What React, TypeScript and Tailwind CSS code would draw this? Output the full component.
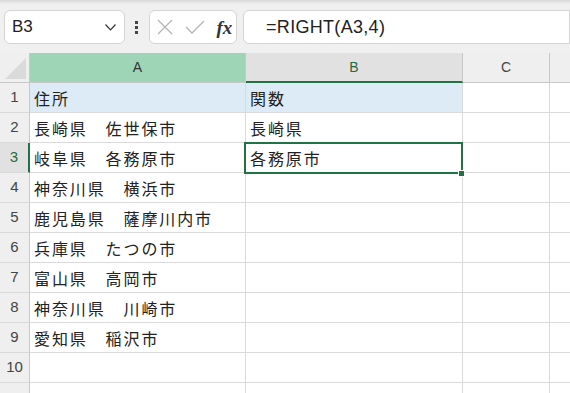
const rows = [
  ['住所', '関数'],
  ['長崎県　佐世保市', '長崎県'],
  ['岐阜県　各務原市', '各務原市'],
  ['神奈川県　横浜市', ''],
  ['鹿児島県　薩摩川内市', ''],
  ['兵庫県　たつの市', ''],
  ['富山県　高岡市', ''],
  ['神奈川県　川崎市', ''],
  ['愛知県　稲沢市', ''],
  ['', ''],
  ['', ''],
];

const jp = "font-['Noto_Sans_CJK_JP',sans-serif] text-[16px] tracking-[1.9px] text-[#222]";

const App = () => {
  return (
    <div className="h-[393px] w-[570px] overflow-hidden bg-[#f0f0f0] font-['Liberation_Sans',sans-serif]">
      {/* formula bar */}
      <div className="h-[53px] bg-gradient-to-b from-[#d9d9d9] via-[#f0f0f0] via-[8%] to-[#f0f0f0] pt-[10px] flex items-start">
        <div className="ml-[4px] w-[125px] h-[34px] bg-white border border-[#d4d4d4] rounded-[6px] flex items-center justify-between pl-[7px] pr-[8px]">
          <span className="text-[17px] text-[#222]">B3</span>
          <svg width="11" height="7" viewBox="0 0 11 7" fill="none" stroke="#333" strokeWidth="1.2">
            <path d="M0.5 0.5 L5.5 5.8 L10.5 0.5" />
          </svg>
        </div>
        <div className="w-[26px] h-[34px] flex flex-col items-center justify-center gap-[2px]">
          <div className="w-[3px] h-[3px] bg-[#444]" />
          <div className="w-[3px] h-[3px] bg-[#444]" />
          <div className="w-[3px] h-[3px] bg-[#444]" />
        </div>
        <div className="w-[91px] h-[34px] bg-white border border-[#d4d4d4] rounded-[6px] flex items-center pl-[7px]">
          <svg width="16" height="16" viewBox="0 0 16 16" fill="none" stroke="#b4b4b4" strokeWidth="1.3">
            <path d="M1 1 L15 15 M15 1 L1 15" />
          </svg>
          <svg className="ml-[12px]" width="20" height="14" viewBox="0 0 20 14" fill="none" stroke="#b4b4b4" strokeWidth="1.3">
            <path d="M1 7 L7 13 L19 1" />
          </svg>
          <span className="ml-[11px] font-['Liberation_Serif',serif] italic font-bold text-[19px] text-[#333] leading-none">fx</span>
        </div>
        <div className="ml-[6px] w-[340px] h-[34px] bg-white border border-[#d4d4d4] rounded-l-[6px] flex items-center pl-[22px]">
          <span className="text-[18px] tracking-[0.3px] text-[#222]">=RIGHT(A3,4)</span>
        </div>
      </div>

      {/* sheet grid */}
      <div className="relative grid grid-cols-[30px_216px_217px_87px_1fr] auto-rows-[30px] bg-white">
        <div className="bg-[#efefef] border-r border-b border-[#c8c8c8] flex items-end justify-end pr-[3px] pb-[3px]">
          <svg width="21" height="21" viewBox="0 0 21 21">
            <polygon points="21,0 21,21 0,21" fill="#dadada" />
          </svg>
        </div>
        <div className="bg-[#9fd5b7] border-r border-b border-[#c8c8c8] flex items-center justify-center text-[14px] text-[#333]">A</div>
        <div className="bg-[#e1e1e1] border-r border-b-2 border-[#c8c8c8] border-b-[#217346] flex items-center justify-center text-[14px] text-[#1e6b41]">B</div>
        <div className="bg-[#efefef] border-r border-b border-[#c8c8c8] flex items-center justify-center text-[14px] text-[#444]">C</div>
        <div className="bg-[#efefef] border-b border-[#c8c8c8]" />

        {rows.map((r, i) => {
          const sel = i === 2;
          return [
            <div
              key={`h${i}`}
              className={`${sel ? 'bg-[#e1e1e1] text-[#1e6b41] border-r-2 border-r-[#217346]' : 'bg-[#efefef] text-[#444] border-r border-r-[#c8c8c8]'} border-b border-b-[#dadada] flex items-center justify-center text-[15px]`}
            >
              {i < 10 ? i + 1 : ''}
            </div>,
            <div key={`a${i}`} className={`${i === 0 ? 'bg-[#ddebf7]' : ''} border-r border-b border-[#dadada] flex items-center pl-[4px] pt-[1px] ${jp}`}>
              {r[0]}
            </div>,
            <div key={`b${i}`} className={`${i === 0 ? 'bg-[#ddebf7]' : ''} border-r border-b border-[#dadada] flex items-center pl-[4px] pt-[1px] ${jp}`}>
              {r[1]}
            </div>,
            <div key={`c${i}`} className="border-r border-b border-[#dadada]" />,
            <div key={`d${i}`} className="border-b border-[#dadada]" />,
          ];
        })}

        {/* active cell */}
        <div className="absolute left-[244px] top-[89px] w-[219px] h-[32px] border-2 border-[#217346] pointer-events-none" />
        <div className="absolute left-[458px] top-[117px] w-[7px] h-[7px] bg-[#217346] border border-white" />
      </div>
    </div>
  );
};

export default App;
